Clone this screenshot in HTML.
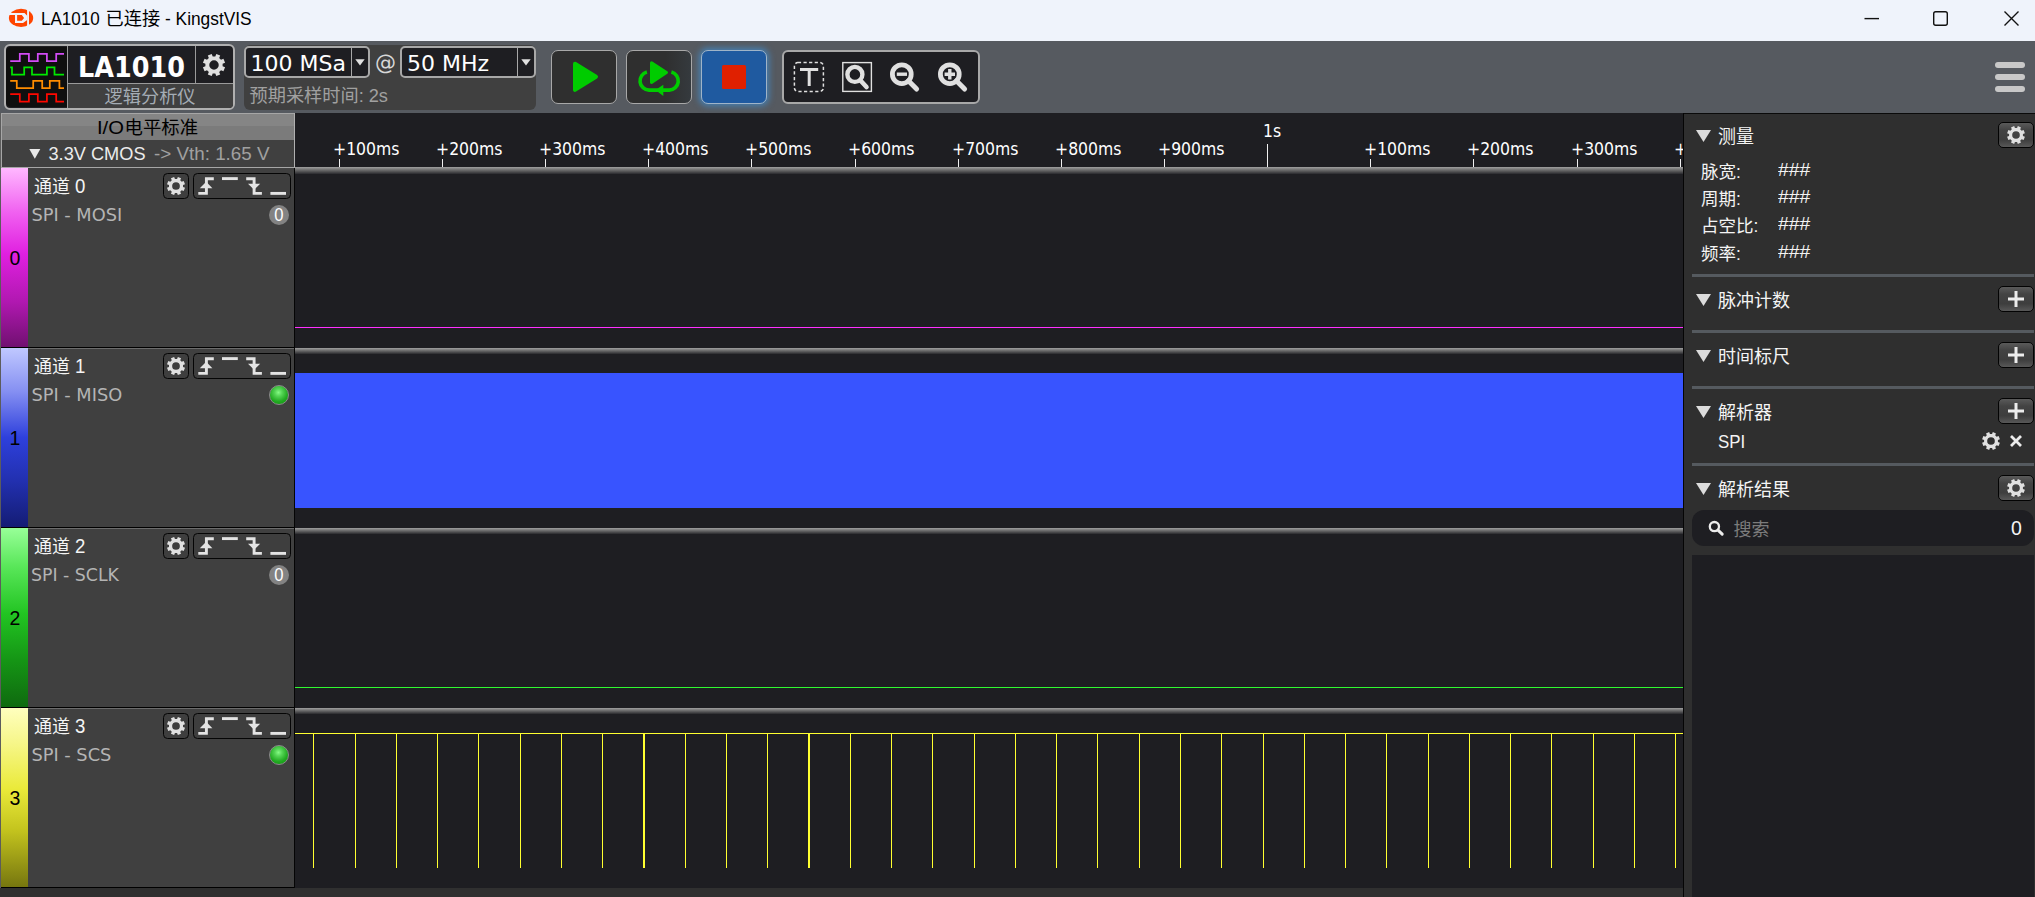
<!DOCTYPE html>
<html lang="zh-CN"><head><meta charset="utf-8"><title>LA1010 已连接 - KingstVIS</title>
<style>
html,body{margin:0;padding:0}
body{width:2035px;height:897px;position:relative;overflow:hidden;background:#1e1e22;font-family:"Liberation Sans","Noto Sans CJK SC",sans-serif;color:#f0f0f0}
.abs{position:absolute}
.t{position:absolute;white-space:nowrap;line-height:1;transform-origin:0 0}
.dv{font-family:"DejaVu Sans","Noto Sans CJK SC",sans-serif}
.cj{font-family:"Liberation Sans","Noto Sans CJK SC",sans-serif}
.sep{position:absolute;left:1692px;width:342px;height:3px;background:#555a5f}
.btn{position:absolute;box-sizing:border-box;border:1px solid #030303;border-radius:5px;background:linear-gradient(#5a5a5a,#434343 30%,#3e3e3e 70%,#585858)}
.cbtn{position:absolute;box-sizing:border-box;border:1px solid #050505;border-radius:4.5px;background:#3e3e3e}
.bar{position:absolute;left:295px;width:1388px;height:6px;background:linear-gradient(#a0a0a0,#707070 40%,#2a2a2e)}
</style></head><body>

<div class="abs" style="left:0;top:0;width:2035px;height:41px;background:#eff3fb"></div>
<svg class="abs" style="left:8px;top:7px" width="27" height="22" viewBox="8 7 27 22">
<ellipse cx="21.05" cy="17.9" rx="12.15" ry="9.1" fill="#ff4500"/>
<rect x="27.1" y="7" width="1.9" height="22" fill="#eff3fb"/>
<path d="M8 13 H24.5 L27.2 15.8 V20 L23 22.9 H15 V15.1 H8 Z" fill="#eff3fb"/>
<path d="M17.1 15.1 H21.8 L24.1 17.9 L21.8 20.8 H17.1 Z" fill="#ff4500"/>
</svg>
<div class="t cj" id="title" style="left:41px;top:9px;font-size:18px;line-height:20px;color:#000;transform:scaleX(0.945)">LA1010</div>
<div class="t cj" id="title2" style="left:105.6px;top:9px;font-size:18.2px;line-height:20px;color:#000">已连接</div>
<div class="t cj" id="title3" style="left:165px;top:9px;font-size:18px;line-height:20px;color:#000;transform:scaleX(0.962)">- KingstVIS</div>
<svg class="abs" style="left:1855px;top:5px" width="175" height="28" viewBox="0 0 175 28" fill="none" stroke="#111" stroke-width="1.4">
<path d="M9.5 13.6 H24"/>
<rect x="78.7" y="6.7" width="13.6" height="13.6" rx="2"/>
<path d="M149.5 6.5 L163.5 20.5 M163.5 6.5 L149.5 20.5"/>
</svg>
<div class="abs" style="left:0;top:41px;width:2035px;height:72px;background:#565a60"></div>
<div class="abs" style="left:4px;top:44px;width:231px;height:66px;box-sizing:border-box;border:2px solid #b0b0b0;border-radius:6px;background:#1e1e22;overflow:hidden"><div class="abs" style="left:0;top:1px;width:61px;height:60px;border-radius:5px 0 0 5px;background:#0f0f0f"></div><div class="abs" style="left:61px;top:0;width:1px;height:62px;background:#9a9a9a"></div><div class="abs" style="left:62px;top:38px;width:170px;height:24px;background:#404040"></div><div class="abs" style="left:62px;top:37px;width:170px;height:1px;background:#9a9a9a"></div><div class="abs" style="left:189px;top:0;width:1px;height:37px;background:#9a9a9a"></div></div>
<svg class="abs" style="left:0;top:41px" width="70" height="70" viewBox="0 41 70 70" fill="none" stroke-width="1.75" stroke-linejoin="miter">
<path d="M10.2 61.0 H19.8 V53.9 H28.9 V61.0 H37.8 V53.9 H46.9 V61.0 H56.2 V53.9 H64.0" stroke="#d24cf5"/>
<path d="M10.2 67.4 H12 V74.7 H24.2 V67.4 H32 V74.7 H46.9 V67.4 H54.5 V74.7 H64" stroke="#00e800"/>
<path d="M10.2 80.8 H16.8 V88.1 H33.2 V80.8 H42.2 V88.1 H49.8 V80.8 H59.4 V88.1 H64.0" stroke="#ff8c00"/>
<path d="M10.2 94.2 H19.8 V101.7 H28.9 V94.2 H37.8 V101.7 H46.9 V94.2 H56.2 V101.7 H64.0" stroke="#ff0800"/>
</svg>
<div class="t dv" id="la" style="left:77.7px;top:51.5px;font-size:27.5px;line-height:30px;font-weight:bold;color:#fff;transform:scaleX(0.9265)">LA1010</div>
<svg class="abs" style="left:200.0px;top:51.0px" width="28" height="28" viewBox="0 0 28 28"><path d="M15.29 5.40 L16.29 2.93 L20.20 4.56 L19.17 7.00 L21.00 8.83 L23.44 7.80 L25.07 11.71 L22.60 12.71 L22.60 15.29 L25.07 16.29 L23.44 20.20 L21.00 19.17 L19.17 21.00 L20.20 23.44 L16.29 25.07 L15.29 22.60 L12.71 22.60 L11.71 25.07 L7.80 23.44 L8.83 21.00 L7.00 19.17 L4.56 20.20 L2.93 16.29 L5.40 15.29 L5.40 12.71 L2.93 11.71 L4.56 7.80 L7.00 8.83 L8.83 7.00 L7.80 4.56 L11.71 2.93 L12.71 5.40 Z M18.75 14.00 A4.75 4.75 0 1 0 9.25 14.00 A4.75 4.75 0 1 0 18.75 14.00 Z" fill="#e0e0e0" fill-rule="evenodd"/></svg>
<div class="t cj" id="ljfxy" style="left:104.6px;top:86.1px;font-size:18.2px;line-height:22px;color:#a4acb4">逻辑分析仪</div>
<div class="abs" style="left:244px;top:45px;width:292px;height:65px;border-radius:6px;background:#404040"></div>
<div class="abs" style="left:244px;top:46px;width:126px;height:32px;box-sizing:border-box;border:2px solid #a8a8a8;border-radius:5px;background:#1e1e22"></div>
<div class="abs" style="left:351px;top:48px;width:1px;height:28px;background:#a8a8a8"></div>
<svg class="abs" style="left:355px;top:59px" width="10" height="7" viewBox="0 0 10 7"><path d="M0.3 0.3 H9.7 L5 6.6 Z" fill="#e0e0e0"/></svg>
<div class="t dv" id="c1" style="left:250.5px;top:51.6px;font-size:22px;line-height:24px;color:#fff">100 MSa</div>
<div class="abs" style="left:400px;top:46px;width:136px;height:32px;box-sizing:border-box;border:2px solid #a8a8a8;border-radius:5px;background:#1e1e22"></div>
<div class="abs" style="left:517px;top:48px;width:1px;height:28px;background:#a8a8a8"></div>
<svg class="abs" style="left:521px;top:59px" width="10" height="7" viewBox="0 0 10 7"><path d="M0.3 0.3 H9.7 L5 6.6 Z" fill="#e0e0e0"/></svg>
<div class="t dv" id="c2" style="left:407.0px;top:51.6px;font-size:22px;line-height:24px;color:#fff">50 MHz</div>
<div class="t dv" id="at" style="left:375px;top:51px;font-size:21px;line-height:24px;color:#d8d8d8">@</div>
<div class="t cj" id="yq" style="left:249.5px;top:85px;font-size:18.2px;line-height:22px;color:#a0a0a0">预期采样时间: 2s</div>
<div class="abs" style="left:551px;top:50px;width:66px;height:54px;box-sizing:border-box;border:1px solid #a8a8a8;border-radius:7px;background:#2f2f2f"></div>
<svg class="abs" style="left:551px;top:50px" width="66" height="54" viewBox="551 50 66 54"><path d="M575 63.8 L596 76.8 L575 89.9 Z" fill="#00cc00" stroke="#00cc00" stroke-width="4" stroke-linejoin="round"/></svg>
<div class="abs" style="left:626px;top:50px;width:66px;height:54px;box-sizing:border-box;border:1px solid #a8a8a8;border-radius:7px;background:linear-gradient(90deg,#2f2f2f 60%,#353a3e)"></div>
<svg class="abs" style="left:626px;top:50px" width="66" height="54" viewBox="626 50 66 54">
<path d="M651.5 62.7 L666.5 72.5 L651.5 82.4 Z" fill="#00cc00" stroke="#00cc00" stroke-width="3" stroke-linejoin="round"/>
<path d="M646.9 72 A9.2 9.2 0 0 0 649 90.1 H669.3 A9.2 9.2 0 0 0 671.4 72" fill="none" stroke="#00cc00" stroke-width="3.6"/>
<path d="M655.5 90 L663.3 84.8 L663.3 96 Z" fill="#00cc00"/>
</svg>
<div class="abs" style="left:701px;top:50px;width:66px;height:54px;box-sizing:border-box;border:1px solid #9fb4c8;border-radius:7px;background:#1f5aa0;box-shadow:0 0 6px 1.5px rgba(62,145,215,0.7)"></div>
<div class="abs" style="left:722px;top:65px;width:24px;height:24px;border-radius:1.5px;background:#e02000"></div>
<div class="abs" style="left:782px;top:50px;width:198px;height:54px;box-sizing:border-box;border:2px solid #a8a8a8;border-radius:6px;background:#1e1e22"></div>
<svg class="abs" style="left:782px;top:50px" width="198" height="54" viewBox="782 50 198 54" fill="none" stroke="#e0e0e0">
<rect x="794.4" y="62.6" width="29" height="28.8" rx="3.5" stroke-width="1.5" stroke-dasharray="3.2 2.4"/>
<path d="M800 69.5 H818.2 M809.2 69.5 V86" stroke-width="3"/>
<rect x="842.8" y="62.6" width="28.6" height="28.8" stroke-width="1.4"/>
<circle cx="854.9" cy="74.4" r="7.5" stroke-width="4.4"/>
<path d="M860.5 80.5 L866.5 87" stroke-width="4.6" stroke-linecap="round"/>
<circle cx="901.8" cy="74.2" r="9.4" stroke-width="4.8"/>
<path d="M908.4 80.8 L916.6 89" stroke-width="5" stroke-linecap="round"/>
<path d="M896.8 74.2 H907" stroke-width="3.4"/>
<circle cx="949.8" cy="74.2" r="9.4" stroke-width="4.8"/>
<path d="M956.4 80.8 L964.6 89" stroke-width="5" stroke-linecap="round"/>
<path d="M944.6 74.2 H955 M949.8 69 V79.4" stroke-width="3.4"/>
</svg>
<div class="abs" style="left:1995px;top:62px;width:30px;height:6px;border-radius:3px;background:#c8c8c8"></div>
<div class="abs" style="left:1995px;top:74px;width:30px;height:6px;border-radius:3px;background:#c8c8c8"></div>
<div class="abs" style="left:1995px;top:86px;width:30px;height:6px;border-radius:3px;background:#c8c8c8"></div>
<div class="abs" style="left:0;top:113px;width:295px;height:784px;background:#303030"></div>
<div class="abs" style="left:1px;top:113px;width:294px;height:13px;background:#858585"></div>
<div class="abs" style="left:1px;top:126px;width:294px;height:14px;background:#7b7b7b"></div>
<div class="abs" style="left:1px;top:140px;width:294px;height:27px;background:#404040"></div>
<div class="abs" style="left:1px;top:113px;width:294px;height:1px;background:#a6a6a6"></div>
<div class="abs" style="left:1px;top:113px;width:1px;height:55px;background:#a6a6a6"></div>
<div class="abs" style="left:294px;top:113px;width:1px;height:55px;background:#b0b0b0"></div>
<div class="abs" style="left:1px;top:167px;width:294px;height:1px;background:#a6a6a6"></div>
<div class="t cj" id="io" style="left:97px;top:117.3px;font-size:18.36px;line-height:22px;color:#000"><span style="display:inline-block;transform:scaleX(1.1);transform-origin:0 0;width:27.6px">I/O</span>电平标准</div>
<svg class="abs" style="left:29px;top:149px" width="12" height="10" viewBox="0 0 12 10"><path d="M0.3 0 H11.3 L5.8 9.8 Z" fill="#e8e8e8"/></svg>
<div class="t cj" id="cmos" style="left:48.5px;top:142.7px;font-size:18.2px;line-height:22px;color:#ececec">3.3V CMOS</div>
<div class="t cj" id="vth" style="left:154px;top:142.7px;font-size:18px;line-height:22px;color:#a0a0a0;transform:scaleX(1.045)">-&gt; Vth: 1.65 V</div>
<div class="abs" style="left:1px;top:168px;width:27px;height:179px;background:linear-gradient(#ffb8ff,#f060f0 25%,#e020e0 48%,#b018b0 75%,#701070)"></div>
<div class="abs" style="left:28px;top:168px;width:266px;height:179px;background:#404040"></div>
<div class="abs" style="left:1px;top:347px;width:293px;height:1px;background:#000"></div>
<div class="t" style="left:8px;top:246px;width:14px;text-align:center;font-family:'Liberation Sans',sans-serif;font-size:19.5px;line-height:24px;color:#000" id="n0">0</div>
<div class="t cj" id="ch0" style="left:34px;top:176.4px;font-size:18px;line-height:22px;color:#f4f4f4">通道 <span style="font-size:20px;line-height:1px;display:inline-block;transform:scaleX(.93);transform-origin:0 50%">0</span></div>
<div class="t dv" id="lb0" style="left:31.4px;top:204px;font-size:17.8px;line-height:22px;color:#b4b4b4">SPI - MOSI</div>
<div class="cbtn" style="left:163px;top:173px;width:26px;height:26px"></div>
<svg class="abs" style="left:164.0px;top:174.0px" width="24" height="24" viewBox="0 0 24 24"><path d="M13.05 4.99 L13.87 2.99 L17.05 4.31 L16.21 6.30 L17.70 7.79 L19.69 6.95 L21.01 10.13 L19.01 10.95 L19.01 13.05 L21.01 13.87 L19.69 17.05 L17.70 16.21 L16.21 17.70 L17.05 19.69 L13.87 21.01 L13.05 19.01 L10.95 19.01 L10.13 21.01 L6.95 19.69 L7.79 17.70 L6.30 16.21 L4.31 17.05 L2.99 13.87 L4.99 13.05 L4.99 10.95 L2.99 10.13 L4.31 6.95 L6.30 7.79 L7.79 6.30 L6.95 4.31 L10.13 2.99 L10.95 4.99 Z M15.86 12.00 A3.86 3.86 0 1 0 8.14 12.00 A3.86 3.86 0 1 0 15.86 12.00 Z" fill="#e0e0e0" fill-rule="evenodd"/></svg>
<div class="cbtn" style="left:193px;top:173px;width:98px;height:26px"></div>
<svg class="abs" style="left:193px;top:173px" width="98" height="26" viewBox="193 5 98 26" fill="none" stroke="#e4e4e4" stroke-width="2.9"><path d="M198.3 25.4 H206.4 V10.7 H213.8"/><path d="M206.2 13.8 L199.8 20.2 H212.4 Z" fill="#e4e4e4" stroke="none"/><path d="M222 10.6 H237.8"/><path d="M246.2 10.7 H254.1 V25.4 H261.9"/><path d="M254.1 21.8 L248 15.8 H260.2 Z" fill="#e4e4e4" stroke="none"/><path d="M270.4 25.4 H286"/></svg>
<div class="abs" style="left:269px;top:205px;width:20px;height:20px;border-radius:10px;background:#838383"></div>
<div class="t cj" style="left:269px;top:205.3px;width:20px;text-align:center;font-size:18.5px;line-height:20px;color:#fff;transform:scaleX(0.9);transform-origin:50% 50%">0</div>
<div class="abs" style="left:1px;top:348px;width:27px;height:179px;background:linear-gradient(#c0c8ff,#8690f2 24%,#2e40dc 50%,#2230b0 74%,#141c74)"></div>
<div class="abs" style="left:28px;top:348px;width:266px;height:179px;background:#404040"></div>
<div class="abs" style="left:28px;top:348px;width:266px;height:1px;background:#6c6c6c"></div>
<div class="abs" style="left:1px;top:527px;width:293px;height:1px;background:#000"></div>
<div class="t" style="left:8px;top:426px;width:14px;text-align:center;font-family:'Liberation Sans',sans-serif;font-size:19.5px;line-height:24px;color:#000" id="n1">1</div>
<div class="t cj" id="ch1" style="left:34px;top:356.4px;font-size:18px;line-height:22px;color:#f4f4f4">通道 <span style="font-size:20px;line-height:1px;display:inline-block;transform:scaleX(.93);transform-origin:0 50%">1</span></div>
<div class="t dv" id="lb1" style="left:31.4px;top:384px;font-size:17.8px;line-height:22px;color:#b4b4b4">SPI - MISO</div>
<div class="cbtn" style="left:163px;top:353px;width:26px;height:26px"></div>
<svg class="abs" style="left:164.0px;top:354.0px" width="24" height="24" viewBox="0 0 24 24"><path d="M13.05 4.99 L13.87 2.99 L17.05 4.31 L16.21 6.30 L17.70 7.79 L19.69 6.95 L21.01 10.13 L19.01 10.95 L19.01 13.05 L21.01 13.87 L19.69 17.05 L17.70 16.21 L16.21 17.70 L17.05 19.69 L13.87 21.01 L13.05 19.01 L10.95 19.01 L10.13 21.01 L6.95 19.69 L7.79 17.70 L6.30 16.21 L4.31 17.05 L2.99 13.87 L4.99 13.05 L4.99 10.95 L2.99 10.13 L4.31 6.95 L6.30 7.79 L7.79 6.30 L6.95 4.31 L10.13 2.99 L10.95 4.99 Z M15.86 12.00 A3.86 3.86 0 1 0 8.14 12.00 A3.86 3.86 0 1 0 15.86 12.00 Z" fill="#e0e0e0" fill-rule="evenodd"/></svg>
<div class="cbtn" style="left:193px;top:353px;width:98px;height:26px"></div>
<svg class="abs" style="left:193px;top:353px" width="98" height="26" viewBox="193 5 98 26" fill="none" stroke="#e4e4e4" stroke-width="2.9"><path d="M198.3 25.4 H206.4 V10.7 H213.8"/><path d="M206.2 13.8 L199.8 20.2 H212.4 Z" fill="#e4e4e4" stroke="none"/><path d="M222 10.6 H237.8"/><path d="M246.2 10.7 H254.1 V25.4 H261.9"/><path d="M254.1 21.8 L248 15.8 H260.2 Z" fill="#e4e4e4" stroke="none"/><path d="M270.4 25.4 H286"/></svg>
<div class="abs" style="left:269px;top:385px;width:20px;height:20px;border-radius:10px;box-sizing:border-box;border:1px solid #8a8a8a;background:radial-gradient(circle at 47% 36%,#84fa84 0%,#54d454 25%,#22aa22 60%,#0a920a 100%)"></div>
<div class="abs" style="left:1px;top:528px;width:27px;height:179px;background:linear-gradient(#98ff98,#58e658 22%,#22c422 48%,#159515 74%,#0f6a0f)"></div>
<div class="abs" style="left:28px;top:528px;width:266px;height:179px;background:#404040"></div>
<div class="abs" style="left:28px;top:528px;width:266px;height:1px;background:#6c6c6c"></div>
<div class="abs" style="left:1px;top:707px;width:293px;height:1px;background:#000"></div>
<div class="t" style="left:8px;top:606px;width:14px;text-align:center;font-family:'Liberation Sans',sans-serif;font-size:19.5px;line-height:24px;color:#000" id="n2">2</div>
<div class="t cj" id="ch2" style="left:34px;top:536.4px;font-size:18px;line-height:22px;color:#f4f4f4">通道 <span style="font-size:20px;line-height:1px;display:inline-block;transform:scaleX(.93);transform-origin:0 50%">2</span></div>
<div class="t dv" id="lb2" style="left:31.4px;top:564px;font-size:17.8px;line-height:22px;color:#b4b4b4;transform:scaleX(0.975)">SPI - SCLK</div>
<div class="cbtn" style="left:163px;top:533px;width:26px;height:26px"></div>
<svg class="abs" style="left:164.0px;top:534.0px" width="24" height="24" viewBox="0 0 24 24"><path d="M13.05 4.99 L13.87 2.99 L17.05 4.31 L16.21 6.30 L17.70 7.79 L19.69 6.95 L21.01 10.13 L19.01 10.95 L19.01 13.05 L21.01 13.87 L19.69 17.05 L17.70 16.21 L16.21 17.70 L17.05 19.69 L13.87 21.01 L13.05 19.01 L10.95 19.01 L10.13 21.01 L6.95 19.69 L7.79 17.70 L6.30 16.21 L4.31 17.05 L2.99 13.87 L4.99 13.05 L4.99 10.95 L2.99 10.13 L4.31 6.95 L6.30 7.79 L7.79 6.30 L6.95 4.31 L10.13 2.99 L10.95 4.99 Z M15.86 12.00 A3.86 3.86 0 1 0 8.14 12.00 A3.86 3.86 0 1 0 15.86 12.00 Z" fill="#e0e0e0" fill-rule="evenodd"/></svg>
<div class="cbtn" style="left:193px;top:533px;width:98px;height:26px"></div>
<svg class="abs" style="left:193px;top:533px" width="98" height="26" viewBox="193 5 98 26" fill="none" stroke="#e4e4e4" stroke-width="2.9"><path d="M198.3 25.4 H206.4 V10.7 H213.8"/><path d="M206.2 13.8 L199.8 20.2 H212.4 Z" fill="#e4e4e4" stroke="none"/><path d="M222 10.6 H237.8"/><path d="M246.2 10.7 H254.1 V25.4 H261.9"/><path d="M254.1 21.8 L248 15.8 H260.2 Z" fill="#e4e4e4" stroke="none"/><path d="M270.4 25.4 H286"/></svg>
<div class="abs" style="left:269px;top:565px;width:20px;height:20px;border-radius:10px;background:#838383"></div>
<div class="t cj" style="left:269px;top:565.3px;width:20px;text-align:center;font-size:18.5px;line-height:20px;color:#fff;transform:scaleX(0.9);transform-origin:50% 50%">0</div>
<div class="abs" style="left:1px;top:708px;width:27px;height:179px;background:linear-gradient(#ffffbe,#f6f688 20%,#eaea3a 45%,#c4c41e 68%,#76760f)"></div>
<div class="abs" style="left:28px;top:708px;width:266px;height:179px;background:#404040"></div>
<div class="abs" style="left:28px;top:708px;width:266px;height:1px;background:#6c6c6c"></div>
<div class="abs" style="left:1px;top:887px;width:293px;height:1px;background:#000"></div>
<div class="t" style="left:8px;top:786px;width:14px;text-align:center;font-family:'Liberation Sans',sans-serif;font-size:19.5px;line-height:24px;color:#000" id="n3">3</div>
<div class="t cj" id="ch3" style="left:34px;top:716.4px;font-size:18px;line-height:22px;color:#f4f4f4">通道 <span style="font-size:20px;line-height:1px;display:inline-block;transform:scaleX(.93);transform-origin:0 50%">3</span></div>
<div class="t dv" id="lb3" style="left:31.4px;top:744px;font-size:17.8px;line-height:22px;color:#b4b4b4">SPI - SCS</div>
<div class="cbtn" style="left:163px;top:713px;width:26px;height:26px"></div>
<svg class="abs" style="left:164.0px;top:714.0px" width="24" height="24" viewBox="0 0 24 24"><path d="M13.05 4.99 L13.87 2.99 L17.05 4.31 L16.21 6.30 L17.70 7.79 L19.69 6.95 L21.01 10.13 L19.01 10.95 L19.01 13.05 L21.01 13.87 L19.69 17.05 L17.70 16.21 L16.21 17.70 L17.05 19.69 L13.87 21.01 L13.05 19.01 L10.95 19.01 L10.13 21.01 L6.95 19.69 L7.79 17.70 L6.30 16.21 L4.31 17.05 L2.99 13.87 L4.99 13.05 L4.99 10.95 L2.99 10.13 L4.31 6.95 L6.30 7.79 L7.79 6.30 L6.95 4.31 L10.13 2.99 L10.95 4.99 Z M15.86 12.00 A3.86 3.86 0 1 0 8.14 12.00 A3.86 3.86 0 1 0 15.86 12.00 Z" fill="#e0e0e0" fill-rule="evenodd"/></svg>
<div class="cbtn" style="left:193px;top:713px;width:98px;height:26px"></div>
<svg class="abs" style="left:193px;top:713px" width="98" height="26" viewBox="193 5 98 26" fill="none" stroke="#e4e4e4" stroke-width="2.9"><path d="M198.3 25.4 H206.4 V10.7 H213.8"/><path d="M206.2 13.8 L199.8 20.2 H212.4 Z" fill="#e4e4e4" stroke="none"/><path d="M222 10.6 H237.8"/><path d="M246.2 10.7 H254.1 V25.4 H261.9"/><path d="M254.1 21.8 L248 15.8 H260.2 Z" fill="#e4e4e4" stroke="none"/><path d="M270.4 25.4 H286"/></svg>
<div class="abs" style="left:269px;top:745px;width:20px;height:20px;border-radius:10px;box-sizing:border-box;border:1px solid #8a8a8a;background:radial-gradient(circle at 47% 36%,#84fa84 0%,#54d454 25%,#22aa22 60%,#0a920a 100%)"></div>
<div class="abs" style="left:0;top:113px;width:1px;height:784px;background:#5c5c5c"></div>
<div class="abs" style="left:294px;top:168px;width:1px;height:720px;background:#050505"></div>
<div class="abs" style="left:295px;top:113px;width:1388px;height:775px;background:#1e1e22"></div>
<div class="abs" style="left:0;top:888px;width:1684px;height:9px;background:#303030"></div>
<div class="abs" style="left:1683px;top:113px;width:1px;height:784px;background:#050505"></div>
<div class="abs" style="left:339px;top:159px;width:1px;height:8px;background:#f0f0f0"></div>
<div class="t dv" id="tk1" style="left:332.6px;top:138.6px;font-size:18.1px;line-height:20px;color:#fff;transform:scaleX(0.866)">+100ms</div>
<div class="abs" style="left:442px;top:159px;width:1px;height:8px;background:#f0f0f0"></div>
<div class="t dv" id="tk2" style="left:435.8px;top:138.6px;font-size:18.1px;line-height:20px;color:#fff;transform:scaleX(0.866)">+200ms</div>
<div class="abs" style="left:545px;top:159px;width:1px;height:8px;background:#f0f0f0"></div>
<div class="t dv" id="tk3" style="left:539.0px;top:138.6px;font-size:18.1px;line-height:20px;color:#fff;transform:scaleX(0.866)">+300ms</div>
<div class="abs" style="left:648px;top:159px;width:1px;height:8px;background:#f0f0f0"></div>
<div class="t dv" id="tk4" style="left:642.1px;top:138.6px;font-size:18.1px;line-height:20px;color:#fff;transform:scaleX(0.866)">+400ms</div>
<div class="abs" style="left:751px;top:159px;width:1px;height:8px;background:#f0f0f0"></div>
<div class="t dv" id="tk5" style="left:745.2px;top:138.6px;font-size:18.1px;line-height:20px;color:#fff;transform:scaleX(0.866)">+500ms</div>
<div class="abs" style="left:855px;top:159px;width:1px;height:8px;background:#f0f0f0"></div>
<div class="t dv" id="tk6" style="left:848.4px;top:138.6px;font-size:18.1px;line-height:20px;color:#fff;transform:scaleX(0.866)">+600ms</div>
<div class="abs" style="left:958px;top:159px;width:1px;height:8px;background:#f0f0f0"></div>
<div class="t dv" id="tk7" style="left:951.6px;top:138.6px;font-size:18.1px;line-height:20px;color:#fff;transform:scaleX(0.866)">+700ms</div>
<div class="abs" style="left:1061px;top:159px;width:1px;height:8px;background:#f0f0f0"></div>
<div class="t dv" id="tk8" style="left:1054.7px;top:138.6px;font-size:18.1px;line-height:20px;color:#fff;transform:scaleX(0.866)">+800ms</div>
<div class="abs" style="left:1164px;top:159px;width:1px;height:8px;background:#f0f0f0"></div>
<div class="t dv" id="tk9" style="left:1157.9px;top:138.6px;font-size:18.1px;line-height:20px;color:#fff;transform:scaleX(0.866)">+900ms</div>
<div class="abs" style="left:1267px;top:144px;width:1px;height:23px;background:#f0f0f0"></div>
<div class="t dv" style="left:1263.0px;top:120.5px;font-size:18.1px;line-height:20px;color:#fff;transform:scaleX(0.866)" id="t1s">1s</div>
<div class="abs" style="left:1370px;top:159px;width:1px;height:8px;background:#f0f0f0"></div>
<div class="t dv" id="tk11" style="left:1364.2px;top:138.6px;font-size:18.1px;line-height:20px;color:#fff;transform:scaleX(0.866)">+100ms</div>
<div class="abs" style="left:1473px;top:159px;width:1px;height:8px;background:#f0f0f0"></div>
<div class="t dv" id="tk12" style="left:1467.3px;top:138.6px;font-size:18.1px;line-height:20px;color:#fff;transform:scaleX(0.866)">+200ms</div>
<div class="abs" style="left:1577px;top:159px;width:1px;height:8px;background:#f0f0f0"></div>
<div class="t dv" id="tk13" style="left:1570.5px;top:138.6px;font-size:18.1px;line-height:20px;color:#fff;transform:scaleX(0.866)">+300ms</div>
<div class="abs" style="left:1680px;top:159px;width:1px;height:8px;background:#f0f0f0"></div>
<div class="abs" style="left:1640px;top:136px;width:43px;height:24px;overflow:hidden"><div class="t dv" style="left:33.6px;top:2.6px;font-size:18.1px;line-height:20px;color:#fff;transform:scaleX(0.866)">+400ms</div></div>
<div class="bar" style="top:167px;height:7px"></div>
<div class="bar" style="top:348px"></div>
<div class="bar" style="top:528px"></div>
<div class="bar" style="top:708px"></div>
<div class="abs" style="left:295px;top:327px;width:1388px;height:1px;background:#ff30ff"></div>
<div class="abs" style="left:295px;top:373px;width:1388px;height:135px;background:#3854ff"></div>
<div class="abs" style="left:295px;top:687px;width:1388px;height:1px;background:#30f830"></div>
<div class="abs" style="left:295px;top:733px;width:1388px;height:1px;background:#ffff30"></div>
<div class="abs" style="left:313px;top:734px;width:1px;height:134px;background:#ffff30"></div>
<div class="abs" style="left:355px;top:734px;width:1px;height:134px;background:#ffff30"></div>
<div class="abs" style="left:396px;top:734px;width:1px;height:134px;background:#ffff30"></div>
<div class="abs" style="left:437px;top:734px;width:1px;height:134px;background:#ffff30"></div>
<div class="abs" style="left:478px;top:734px;width:1px;height:134px;background:#ffff30"></div>
<div class="abs" style="left:520px;top:734px;width:1px;height:134px;background:#ffff30"></div>
<div class="abs" style="left:561px;top:734px;width:1px;height:134px;background:#ffff30"></div>
<div class="abs" style="left:602px;top:734px;width:1px;height:134px;background:#ffff30"></div>
<div class="abs" style="left:643px;top:734px;width:2px;height:134px;background:#ffff30"></div>
<div class="abs" style="left:685px;top:734px;width:1px;height:134px;background:#ffff30"></div>
<div class="abs" style="left:726px;top:734px;width:1px;height:134px;background:#ffff30"></div>
<div class="abs" style="left:767px;top:734px;width:1px;height:134px;background:#ffff30"></div>
<div class="abs" style="left:808px;top:734px;width:2px;height:134px;background:#ffff30"></div>
<div class="abs" style="left:850px;top:734px;width:1px;height:134px;background:#ffff30"></div>
<div class="abs" style="left:891px;top:734px;width:1px;height:134px;background:#ffff30"></div>
<div class="abs" style="left:932px;top:734px;width:1px;height:134px;background:#ffff30"></div>
<div class="abs" style="left:974px;top:734px;width:1px;height:134px;background:#ffff30"></div>
<div class="abs" style="left:1015px;top:734px;width:1px;height:134px;background:#ffff30"></div>
<div class="abs" style="left:1056px;top:734px;width:1px;height:134px;background:#ffff30"></div>
<div class="abs" style="left:1097px;top:734px;width:1px;height:134px;background:#ffff30"></div>
<div class="abs" style="left:1139px;top:734px;width:1px;height:134px;background:#ffff30"></div>
<div class="abs" style="left:1180px;top:734px;width:1px;height:134px;background:#ffff30"></div>
<div class="abs" style="left:1221px;top:734px;width:1px;height:134px;background:#ffff30"></div>
<div class="abs" style="left:1263px;top:734px;width:1px;height:134px;background:#ffff30"></div>
<div class="abs" style="left:1304px;top:734px;width:1px;height:134px;background:#ffff30"></div>
<div class="abs" style="left:1345px;top:734px;width:1px;height:134px;background:#ffff30"></div>
<div class="abs" style="left:1386px;top:734px;width:1px;height:134px;background:#ffff30"></div>
<div class="abs" style="left:1428px;top:734px;width:1px;height:134px;background:#ffff30"></div>
<div class="abs" style="left:1469px;top:734px;width:1px;height:134px;background:#ffff30"></div>
<div class="abs" style="left:1510px;top:734px;width:1px;height:134px;background:#ffff30"></div>
<div class="abs" style="left:1551px;top:734px;width:1px;height:134px;background:#ffff30"></div>
<div class="abs" style="left:1593px;top:734px;width:1px;height:134px;background:#ffff30"></div>
<div class="abs" style="left:1634px;top:734px;width:1px;height:134px;background:#ffff30"></div>
<div class="abs" style="left:1675px;top:734px;width:1px;height:134px;background:#ffff30"></div>
<div class="abs" style="left:1684px;top:114px;width:351px;height:783px;background:#2f2f2f"></div>
<div class="abs" style="left:1684px;top:113px;width:351px;height:1px;background:#0a0a0a"></div>
<svg class="abs" style="left:1696px;top:130.2px" width="16" height="13" viewBox="0 0 16 13"><path d="M0 0 H15 L7.5 12 Z" fill="#dcdcdc"/></svg>
<div class="t cj" id="h1" style="left:1718px;top:126px;font-size:18px;line-height:22px;color:#f4f4f4">测量</div>
<div class="btn" style="left:1998px;top:122px;width:36px;height:26px"></div>
<svg class="abs" style="left:2004.0px;top:123.0px" width="24" height="24" viewBox="0 0 24 24"><path d="M13.04 5.07 L13.85 3.09 L17.00 4.39 L16.16 6.36 L17.64 7.84 L19.61 7.00 L20.91 10.15 L18.93 10.96 L18.93 13.04 L20.91 13.85 L19.61 17.00 L17.64 16.16 L16.16 17.64 L17.00 19.61 L13.85 20.91 L13.04 18.93 L10.96 18.93 L10.15 20.91 L7.00 19.61 L7.84 17.64 L6.36 16.16 L4.39 17.00 L3.09 13.85 L5.07 13.04 L5.07 10.96 L3.09 10.15 L4.39 7.00 L6.36 7.84 L7.84 6.36 L7.00 4.39 L10.15 3.09 L10.96 5.07 Z M15.82 12.00 A3.82 3.82 0 1 0 8.18 12.00 A3.82 3.82 0 1 0 15.82 12.00 Z" fill="#e0e0e0" fill-rule="evenodd"/></svg>
<div class="t cj" id="m0" style="left:1701px;top:161px;font-size:17.5px;line-height:22px;color:#f4f4f4">脉宽:</div>
<div class="t cj" id="v0" style="left:1777.5px;top:159.4px;font-size:18px;line-height:22px;color:#f4f4f4;transform:scaleX(1.075)">###</div>
<div class="t cj" id="m1" style="left:1701px;top:188px;font-size:17.5px;line-height:22px;color:#f4f4f4">周期:</div>
<div class="t cj" id="v1" style="left:1777.5px;top:186.4px;font-size:18px;line-height:22px;color:#f4f4f4;transform:scaleX(1.075)">###</div>
<div class="t cj" id="m2" style="left:1701px;top:215px;font-size:17.5px;line-height:22px;color:#f4f4f4">占空比:</div>
<div class="t cj" id="v2" style="left:1777.5px;top:213.4px;font-size:18px;line-height:22px;color:#f4f4f4;transform:scaleX(1.075)">###</div>
<div class="t cj" id="m3" style="left:1701px;top:243px;font-size:17.5px;line-height:22px;color:#f4f4f4">频率:</div>
<div class="t cj" id="v3" style="left:1777.5px;top:241.4px;font-size:18px;line-height:22px;color:#f4f4f4;transform:scaleX(1.075)">###</div>
<div class="sep" style="top:274px"></div>
<svg class="abs" style="left:1696px;top:294.2px" width="16" height="13" viewBox="0 0 16 13"><path d="M0 0 H15 L7.5 12 Z" fill="#dcdcdc"/></svg>
<div class="t cj" id="h2" style="left:1718px;top:290px;font-size:18px;line-height:22px;color:#f4f4f4">脉冲计数</div>
<div class="btn" style="left:1998px;top:286px;width:36px;height:26px"></div>
<svg class="abs" style="left:2007px;top:290px" width="18" height="18" viewBox="0 0 18 18"><path d="M1 9 H17 M9 1 V17" stroke="#ececec" stroke-width="3"/></svg>
<div class="sep" style="top:330px"></div>
<svg class="abs" style="left:1696px;top:350.2px" width="16" height="13" viewBox="0 0 16 13"><path d="M0 0 H15 L7.5 12 Z" fill="#dcdcdc"/></svg>
<div class="t cj" id="h3" style="left:1718px;top:346px;font-size:18px;line-height:22px;color:#f4f4f4">时间标尺</div>
<div class="btn" style="left:1998px;top:342px;width:36px;height:26px"></div>
<svg class="abs" style="left:2007px;top:346px" width="18" height="18" viewBox="0 0 18 18"><path d="M1 9 H17 M9 1 V17" stroke="#ececec" stroke-width="3"/></svg>
<div class="sep" style="top:386px"></div>
<svg class="abs" style="left:1696px;top:406.2px" width="16" height="13" viewBox="0 0 16 13"><path d="M0 0 H15 L7.5 12 Z" fill="#dcdcdc"/></svg>
<div class="t cj" id="h4" style="left:1718px;top:402px;font-size:18px;line-height:22px;color:#f4f4f4">解析器</div>
<div class="btn" style="left:1998px;top:398px;width:36px;height:26px"></div>
<svg class="abs" style="left:2007px;top:402px" width="18" height="18" viewBox="0 0 18 18"><path d="M1 9 H17 M9 1 V17" stroke="#ececec" stroke-width="3"/></svg>
<div class="t cj" id="spi" style="left:1717.6px;top:430.7px;font-size:18.2px;line-height:22px;color:#f4f4f4;transform:scaleX(0.93)">SPI</div>
<svg class="abs" style="left:1979.1px;top:429.0px" width="24" height="24" viewBox="0 0 24 24"><path d="M13.04 5.07 L13.85 3.09 L17.00 4.39 L16.16 6.36 L17.64 7.84 L19.61 7.00 L20.91 10.15 L18.93 10.96 L18.93 13.04 L20.91 13.85 L19.61 17.00 L17.64 16.16 L16.16 17.64 L17.00 19.61 L13.85 20.91 L13.04 18.93 L10.96 18.93 L10.15 20.91 L7.00 19.61 L7.84 17.64 L6.36 16.16 L4.39 17.00 L3.09 13.85 L5.07 13.04 L5.07 10.96 L3.09 10.15 L4.39 7.00 L6.36 7.84 L7.84 6.36 L7.00 4.39 L10.15 3.09 L10.96 5.07 Z M15.82 12.00 A3.82 3.82 0 1 0 8.18 12.00 A3.82 3.82 0 1 0 15.82 12.00 Z" fill="#e0e0e0" fill-rule="evenodd"/></svg>
<svg class="abs" style="left:2008px;top:433px" width="16" height="16" viewBox="0 0 16 16"><path d="M3 3 L13 13 M13 3 L3 13" stroke="#ececec" stroke-width="2.8"/></svg>
<div class="sep" style="top:463px"></div>
<svg class="abs" style="left:1696px;top:483.2px" width="16" height="13" viewBox="0 0 16 13"><path d="M0 0 H15 L7.5 12 Z" fill="#dcdcdc"/></svg>
<div class="t cj" id="h5" style="left:1718px;top:479px;font-size:18px;line-height:22px;color:#f4f4f4">解析结果</div>
<div class="btn" style="left:1998px;top:475px;width:36px;height:26px"></div>
<svg class="abs" style="left:2004.0px;top:476.0px" width="24" height="24" viewBox="0 0 24 24"><path d="M13.04 5.07 L13.85 3.09 L17.00 4.39 L16.16 6.36 L17.64 7.84 L19.61 7.00 L20.91 10.15 L18.93 10.96 L18.93 13.04 L20.91 13.85 L19.61 17.00 L17.64 16.16 L16.16 17.64 L17.00 19.61 L13.85 20.91 L13.04 18.93 L10.96 18.93 L10.15 20.91 L7.00 19.61 L7.84 17.64 L6.36 16.16 L4.39 17.00 L3.09 13.85 L5.07 13.04 L5.07 10.96 L3.09 10.15 L4.39 7.00 L6.36 7.84 L7.84 6.36 L7.00 4.39 L10.15 3.09 L10.96 5.07 Z M15.82 12.00 A3.82 3.82 0 1 0 8.18 12.00 A3.82 3.82 0 1 0 15.82 12.00 Z" fill="#e0e0e0" fill-rule="evenodd"/></svg>
<div class="abs" style="left:1692px;top:510px;width:342px;height:36px;border-radius:12px;background:#1e1e22"></div>
<svg class="abs" style="left:1707px;top:519px" width="18" height="18" viewBox="0 0 18 18" fill="none" stroke="#ececec"><circle cx="7.4" cy="7.6" r="4.6" stroke-width="2.3"/><path d="M11 11.2 L15.2 15.2" stroke-width="3" stroke-linecap="round"/></svg>
<div class="t cj" id="ss" style="left:1733.5px;top:519px;font-size:18px;line-height:22px;color:#7c7c7c">搜索</div>
<div class="t cj" id="zero" style="left:2011px;top:517.3px;font-size:20.5px;line-height:22px;color:#f4f4f4;transform:scaleX(0.95)">0</div>
<div class="abs" style="left:1692px;top:555px;width:342px;height:342px;background:#1e1e22"></div>
</body></html>
